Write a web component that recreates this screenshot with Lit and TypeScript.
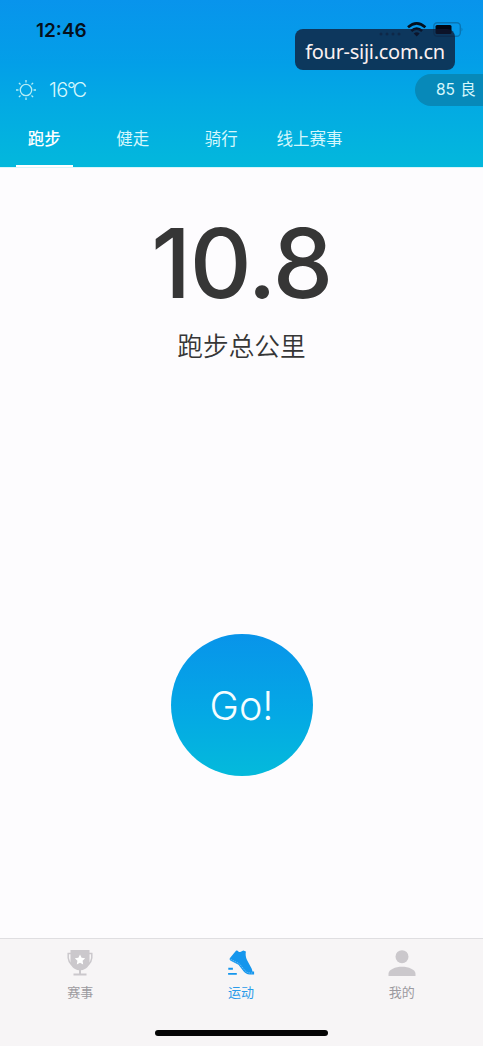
import { LitElement, html, css, svg } from "lit";
import { customElement, state } from "lit/decorators.js";

const SPORTS = ["跑步", "健走", "骑行", "线上赛事"];

const trophy = svg`<svg width="28" height="28" viewBox="0 0 28 28">
  <path d="M6 4.500H2.200C1.600 10 3 15 8.500 17.500M22 4.500h3.800C26.400 10 25 15 19.500 17.500" fill="none" stroke="#cbc8cc" stroke-width="1.500"/>
  <path d="M4.500 1h19v11c0 5.500-3.500 8.500-8.500 9.300v3.200h5.500v1.900h-13v-1.900H13v-3.200C8 20.500 4.500 17.500 4.500 12z" fill="#cbc8cc"/>
  <path d="M14 5.500l1.600 3.300 3.600.5-2.600 2.500.6 3.600-3.200-1.700-3.200 1.700.6-3.600-2.600-2.500 3.600-.5z" fill="#fff"/>
</svg>`;

const shoe = svg`<svg width="28" height="28" viewBox="0 0 28 28">
  <path d="M9.200 1.600l1.500.2 1.200 1.300C13.800 3 15 2.300 16.300 1.500l2.600.9C18.300 5.500 18.800 8 20 11l4.600 8.500c.5 1.100.7 2 .8 2.900h1.700v3.200h-4.300c-2.900-.2-4.700-1.300-6.300-3.300l-5-6.500-7.800-4.100C2.400 11 2.300 9.900 3.200 8.800z" fill="#1596ed"/>
  <path d="M3.600 10.300l8.600 4.300 5.600 6.900c1.400 1.600 3 2.400 5.200 2.500h3" fill="none" stroke="#9ed5f8" stroke-width=".6" stroke-dasharray="1.500 .8"/>
  <path d="M1.300 19.700h4.600M1.100 24.900h8.700" stroke="#1596ed" stroke-width="1.900"/>
</svg>`;

const person = svg`<svg width="28" height="28" viewBox="0 0 28 28">
  <circle cx="14" cy="7.700" r="6.500" fill="#cbc8cc"/>
  <path d="M.5 27v-2.200c0-4.300 7-7 13.500-7s13.500 2.700 13.500 7V27z" fill="#cbc8cc"/>
</svg>`;

const NAV = [
  { label: "赛事", icon: trophy },
  { label: "运动", icon: shoe },
  { label: "我的", icon: person },
];

@customElement("app-root")
export class AppRoot extends LitElement {
  @state() sport = 0;
  @state() section = 1;

  static styles = css`
    :host {
      display: flex;
      flex-direction: column;
      position: relative;
      height: 1046px;
      overflow: hidden;
      background: #fdfcfe;
      font-family: Inter, "Noto Sans CJK SC", sans-serif;
      color: #363636;
    }
    * { box-sizing: border-box; }
    svg { display: block; flex: none; }
    header {
      flex: none;
      height: 167px;
      display: flex;
      flex-direction: column;
      background: linear-gradient(#0894ec, #039fe8 38%, #03a9e4 60%, #03b8dc);
      color: #d5f7fc;
    }
    .status {
      height: 60px;
      display: flex;
      justify-content: space-between;
      padding: 0 19px 0 36px;
      color: #05101c;
    }
    .time {
      font-size: 19px;
      line-height: 61px;
      font-weight: 600;
    }
    .signals { padding-top: 20px; }
    .weather {
      height: 60px;
      display: flex;
      align-items: center;
      padding-left: 15px;
    }
    .temp {
      margin-left: 12px;
      font-size: 20px;
      font-weight: 300;
      display: flex;
      letter-spacing: -0.6px;
      line-height: 24px;
    }
    .deg { margin-left: -1px; letter-spacing: -3px; }
    .air {
      margin-left: auto;
      width: 68px;
      height: 32px;
      border-radius: 16px 0 0 16px;
      background: #0789b9;
      padding-left: 21px;
      font-size: 15.500px;
      line-height: 32px;
      white-space: nowrap;
      word-spacing: 1px;
    }
    .tabs {
      display: flex;
      height: 48px;
      margin-bottom: -1px;
      padding-left: 16px;
      gap: 32px;
    }
    .tab {
      min-width: 56.500px;
      font-size: 16.500px;
      line-height: 38px;
      text-align: center;
      display: flex;
      flex-direction: column;
      justify-content: space-between;
    }
    .tab.wide { margin-left: -5px; }
    .tab.on { font-weight: 500; color: #fff; }
    .bar { height: 3px; }
    .on .bar { background: #fff; }
    main {
      flex: 1;
      display: flex;
      flex-direction: column;
      align-items: center;
      border-top: 1px solid #d8f5fa;
    }
    .total {
      margin-top: 45px;
      font-size: 96px;
      line-height: 100px;
      font-weight: 550;
      letter-spacing: -1.500px;
    }
    .caption {
      margin-top: 15px;
      font-size: 25.700px;
      line-height: 38px;
      font-weight: 350;
    }
    .go {
      margin-top: 268px;
      width: 142px;
      height: 142px;
      border-radius: 50%;
      background: linear-gradient(#0894ea, #04a8e5 55%, #04badb);
      color: #f4fdff;
      font-size: 39.500px;
      font-weight: 300;
      line-height: 144px;
      text-align: center;
    }
    footer {
      flex: none;
      height: 108px;
      border-top: 1.500px solid #dfdee1;
      background: #f7f5f6;
      display: flex;
      flex-direction: column;
      align-items: center;
      justify-content: space-between;
      padding-bottom: 10px;
    }
    nav { display: flex; width: 482px; align-self: flex-start; padding-top: 10px; }
    .item {
      flex: 1;
      display: flex;
      flex-direction: column;
      align-items: center;
      font-size: 13px;
      line-height: 20px;
      color: #9c9a9f;
      gap: 5px;
    }
    .item.on { color: #2b9be9; }
    .home { width: 173px; height: 6px; border-radius: 3px; background: #050505; }
    .site {
      position: absolute;
      left: 295px;
      top: 29px;
      width: 160px;
      height: 41px;
      border-radius: 8px;
      background: rgba(16, 24, 48, 0.76);
      color: #fbf1f1;
      font: 20px/45px "Noto Sans", sans-serif;
      letter-spacing: -0.280px;
      text-align: center;
    }
  `;

  render() {
    return html`
      <header>
        <div class="status">
          <span class="time">12:46</span>
          <svg class="signals" width="86" height="40" viewBox="0 0 86 20">
            <g fill="#0a5c92"><circle cx="3" cy="14" r="1.500"/><circle cx="9" cy="14" r="1.500"/><circle cx="15" cy="14" r="1.500"/><circle cx="21" cy="14" r="1.500"/></g>
            <g fill="none" stroke="#03101d" stroke-width="2.600"><path d="M30 7.300q8.700-8 17.400 0M33.300 11q5.400-4.800 10.800 0"/></g>
            <path d="M38.700 16.500l-3-3q3-2.500 6 0z" fill="#03101d"/>
            <rect x="55.800" y="2.700" width="26.500" height="13.600" rx="3.500" fill="none" stroke="#0875b4" stroke-width="1.400"/>
            <rect x="57.500" y="5" width="16" height="9" rx="1.500" fill="#020712"/>
            <path d="M83.500 7.500q2 2 0 4z" fill="#0875b4"/>
          </svg>
        </div>
        <div class="weather">
          <svg width="22" height="22" viewBox="0 0 22 22" fill="none" stroke="#b5edf5" stroke-width="1.300">
            <circle cx="11" cy="11" r="5.700"/>
            <path d="M11 1v2.500M11 18.500V21M1 11h2.500M18.500 11H21M3.900 3.900l1.600 1.600M16.500 16.500l1.600 1.600M3.900 18.100l1.600-1.600M16.500 5.500l1.600-1.600"/>
          </svg>
          <span class="temp">16<span class="deg">°C</span></span>
          <span class="air">85 良</span>
        </div>
        <div class="tabs">
          ${SPORTS.map((name, i) => html`
            <div class="tab ${i === this.sport ? "on" : ""} ${name.length > 2 ? "wide" : ""}" @click=${() => (this.sport = i)}>
              <span>${name}</span><span class="bar"></span>
            </div>`)}
        </div>
      </header>
      <main>
        <div class="total">10.8</div>
        <div class="caption">跑步总公里</div>
        <div class="go">Go!</div>
      </main>
      <footer>
        <nav>
          ${NAV.map((item, i) => html`
            <div class="item ${i === this.section ? "on" : ""}" @click=${() => (this.section = i)}>
              ${item.icon}<span>${item.label}</span>
            </div>`)}
        </nav>
        <div class="home"></div>
      </footer>
      <div class="site">four-siji.com.cn</div>
    `;
  }
}
